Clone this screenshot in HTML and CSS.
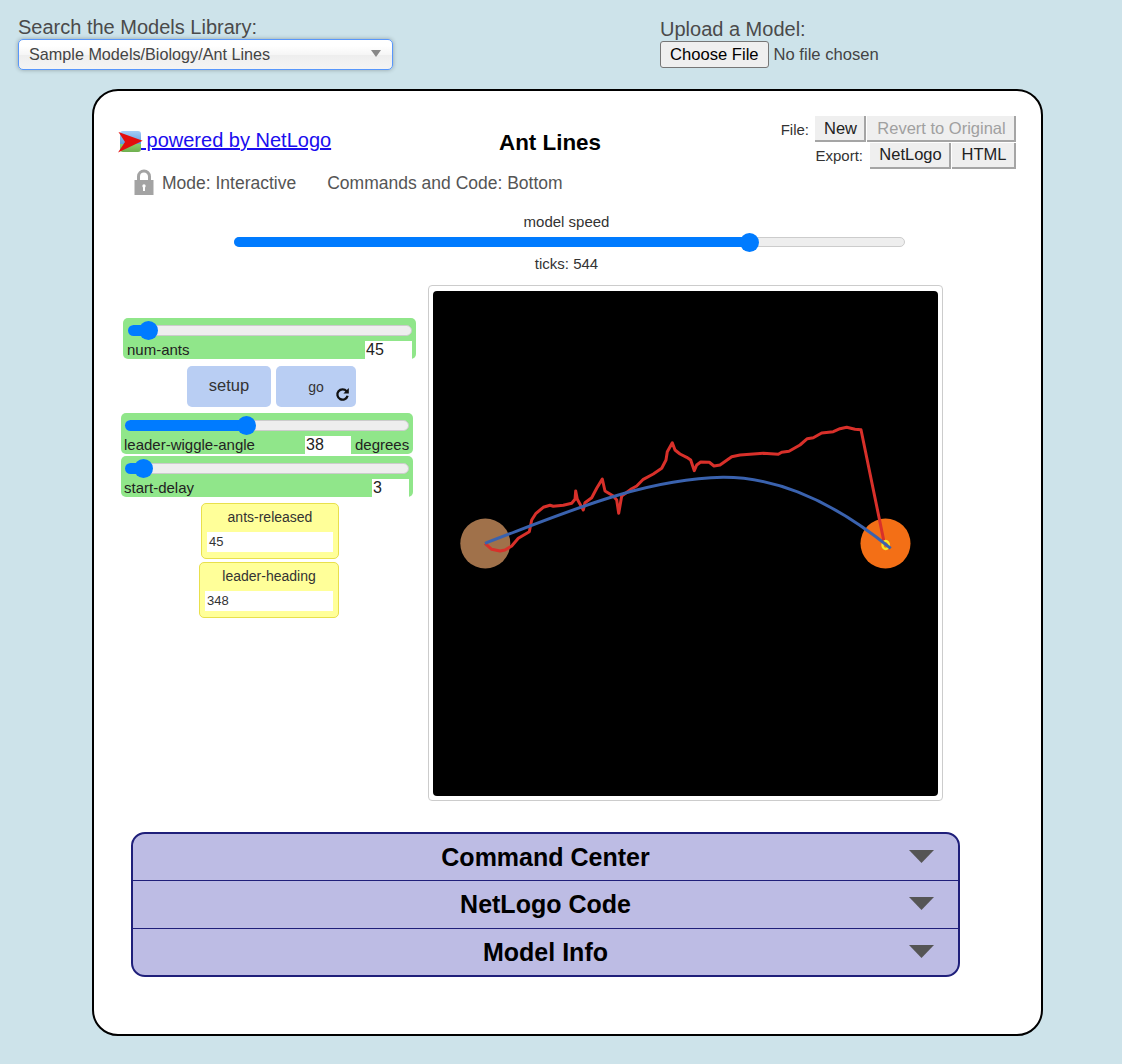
FILE: index.html
```html
<!DOCTYPE html>
<html lang="en">
<head>
    <meta charset="UTF-8">
    <meta name="viewport" content="width=device-width, initial-scale=1.0">
    <title>NetLogo Web</title>
    <link rel="stylesheet" href="styles.css">
</head>
<body>
    <div class="topbar">
        <div class="library">
            <div class="top-label">Search the Models Library:</div>
            <div class="model-select">
                <span>Sample Models/Biology/Ant Lines</span>
                <i class="select-arrow"></i>
            </div>
        </div>
        <div class="upload">
            <div class="top-label">Upload a Model:</div>
            <input type="file" class="file-input">
        </div>
    </div>

    <div class="card">
        <div class="header">
            <a class="powered" href="#"><svg class="logo" width="26" height="22" viewBox="0 0 26 22">
                    <defs>
                        <linearGradient id="sky" x1="0" y1="0" x2="0" y2="1">
                            <stop offset="0" stop-color="#a5cdf7"/>
                            <stop offset="0.6" stop-color="#5f9fe0"/>
                            <stop offset="0.61" stop-color="#8ccb6a"/>
                            <stop offset="1" stop-color="#6fb04f"/>
                        </linearGradient>
                    </defs>
                    <rect x="3" y="0" width="21" height="21" rx="3" fill="url(#sky)"/>
                    <polygon points="1.5,1 25.7,9.7 1,21.5 8,11" fill="#e30d0d"/>
                </svg> powered by NetLogo</a>
            <h1 class="title">Ant Lines</h1>
            <div class="file-tools">
                <div class="tool-row">
                    <span class="tool-label file-label">File:</span>
                    <button class="tool-btn btn-new">New</button>
                    <button class="tool-btn btn-revert">Revert to Original</button>
                </div>
                <div class="tool-row">
                    <span class="tool-label">Export:</span>
                    <button class="tool-btn btn-netlogo">NetLogo</button>
                    <button class="tool-btn btn-html">HTML</button>
                </div>
            </div>
        </div>

        <div class="mode-row">
            <svg class="lock" width="20" height="26" viewBox="0 0 20 26">
                <path d="M4.5 12V7.5a5.5 5.5 0 0 1 11 0V12" fill="none" stroke="#a3a3a3" stroke-width="3"/>
                <rect x="0.5" y="11" width="19" height="15" fill="#a3a3a3"/>
                <rect x="9" y="17" width="2" height="5" fill="#fff"/>
                <circle cx="10" cy="17" r="1.7" fill="#fff"/>
            </svg>
            <span class="mode-text">Mode: Interactive</span>
            <span class="mode-text code-pos">Commands and Code: Bottom</span>
        </div>

        <div class="speed">
            <div class="speed-label">model speed</div>
            <div class="track speed-track"><div class="fill" style="width: 516px"></div></div>
            <div class="speed-label ticks">ticks: 544</div>
        </div>

        <div class="main">
            <div class="widgets">
                <div class="slider slider-ants">
                    <div class="track"><div class="fill" style="width: 21px"></div></div>
                    <div class="slider-info">
                        <span class="slider-name">num-ants</span>
                        <span class="slider-value value-ants">45</span>
                    </div>
                </div>
                <div class="buttons">
                    <button class="run-btn btn-setup">setup</button>
                    <button class="run-btn btn-go">
                        <span>go</span>
                        <svg class="forever" width="15" height="15" viewBox="0 0 15 15">
                            <path d="M11.6 4.2A5.2 5.2 0 1 0 12.6 8.8" fill="none" stroke="#111" stroke-width="2.3"/>
                            <polygon points="13.8,1 13.8,6.6 8.4,6.6" fill="#111"/>
                        </svg>
                    </button>
                </div>
                <div class="slider slider-angle">
                    <div class="track"><div class="fill" style="width: 122px"></div></div>
                    <div class="slider-info">
                        <span class="slider-name">leader-wiggle-angle</span>
                        <span class="slider-value value-angle">38</span>
                        <span class="slider-units">degrees</span>
                    </div>
                </div>
                <div class="slider slider-delay">
                    <div class="track"><div class="fill" style="width: 19px"></div></div>
                    <div class="slider-info">
                        <span class="slider-name">start-delay</span>
                        <span class="slider-value value-delay">3</span>
                    </div>
                </div>
                <div class="monitor monitor-ants">
                    <div class="monitor-name">ants-released</div>
                    <div class="monitor-value">45</div>
                </div>
                <div class="monitor monitor-heading">
                    <div class="monitor-name">leader-heading</div>
                    <div class="monitor-value">348</div>
                </div>
            </div>

            <div class="view">
                <svg class="world" width="505" height="505" viewBox="433 291 505 505">
                    <circle cx="485.3" cy="543.5" r="25" fill="#a0714a"/>
                    <circle cx="885.5" cy="543.5" r="25" fill="#f36f16"/>
                    <polyline class="trail red" points="485,543.3 491.7,549.3 500,551 505,550 511.7,546 518.3,538.3 529.3,531.7 531.7,520 536,513.3 543.3,507.3 550,505.3 553.3,506.3 563.3,505.3 571.7,503.3 575,499.3 575.7,491 577.3,499.3 583.3,510 585,502.7 591.7,497.7 596.7,488.3 602.3,479 605,491 613.3,496 616.7,500 618.7,513.3 621.7,496 631.7,488.7 636.7,486 643.3,479.3 653.3,474 661.7,468.3 666,460 667.3,451.7 672.3,442.7 675,450 680,454 686.7,457.3 690.7,460 694.3,470.7 696.7,465 700.7,462 709.3,462.3 714,466 720,465 731.7,456.7 740,455 763.3,453.3 778.3,454.3 781.7,452.3 789,451.3 800,445 807.3,438.7 813.3,437.7 821.7,433 833.3,431.7 840,428.7 846.7,427.3 855,429.3 861,429.7 884,541.7"/>
                    <ellipse cx="885.7" cy="545" rx="3.2" ry="4" fill="none" stroke="#f5e626" stroke-width="2.4"/>
                    <path class="trail blue" d="M485 543.3C560 515 640 479 723 477.3C780 477 835 503 890.7 548.3"/>
                </svg>
            </div>
        </div>

        <div class="accordion">
            <div class="acc-row"><span class="acc-title">Command Center</span><i class="acc-arrow"></i></div>
            <div class="acc-row"><span class="acc-title">NetLogo Code</span><i class="acc-arrow"></i></div>
            <div class="acc-row"><span class="acc-title">Model Info</span><i class="acc-arrow"></i></div>
        </div>
    </div>
</body>
</html>
```

FILE: styles.css
```css
body {
    margin: 0;
    height: 1064px;
    overflow: hidden;
    background-color: #cde3ea;
    font-family: 'Liberation Sans', Arial, sans-serif;
    color: #444;
}

.topbar {
    display: flex;
    height: 89px;
    padding-left: 18px;
    box-sizing: border-box;
}

.library {
    width: 642px;
    padding-top: 16px;
}

.upload {
    padding-top: 18px;
}

.top-label {
    font-size: 20px;
    line-height: 23px;
    color: #4a4a4a;
}

.model-select {
    display: flex;
    align-items: center;
    justify-content: space-between;
    box-sizing: border-box;
    width: 375px;
    height: 31px;
    padding: 0 11px 0 10px;
    border: 1px solid #5897fb;
    border-radius: 5px;
    background: linear-gradient(#fff 20%, #f6f6f6 50%, #eee 52%, #f4f4f4);
    box-shadow: 0 0 4px rgba(0, 0, 0, 0.3);
    font-size: 16.2px;
    color: #444;
}

.select-arrow {
    width: 0;
    height: 0;
    margin-top: -3px;
    border-left: 5px solid transparent;
    border-right: 5px solid transparent;
    border-top: 7px solid #888;
}

.file-input {
    display: block;
    font-family: 'Liberation Sans', Arial, sans-serif;
    font-size: 16.6px;
    color: #444;
}

.file-input::file-selector-button {
    height: 27px;
    margin-right: 5px;
    padding: 0 9px;
    border: 1px solid #767676;
    border-radius: 3px;
    background-color: #efefef;
    font-family: inherit;
    font-size: 16.6px;
    color: #000;
}

.card {
    box-sizing: border-box;
    width: 951px;
    height: 947px;
    margin-left: 92px;
    padding: 24px 0 0 26px;
    border: 2px solid #000;
    border-radius: 26px;
    background-color: #fff;
}

.header {
    display: flex;
    height: 53px;
}

.powered {
    width: 340px;
    margin-top: 14px;
    font-size: 20px;
    color: #1a0dee;
}

.logo {
    margin: 0 -2px 0 -3px;
    vertical-align: -6px;
}

.title {
    width: 180px;
    margin: 15px 0 0;
    font-size: 22.4px;
    line-height: 26px;
    text-align: center;
    color: #000;
}

.file-tools {
    width: 376px;
}

.tool-row {
    display: flex;
    justify-content: flex-end;
    align-items: center;
    height: 27px;
}

.tool-label {
    margin-right: 6px;
    font-size: 15px;
    color: #333;
}

.file-label {
    margin-right: 5px;
    margin-top: 1px;
}

.tool-btn {
    box-sizing: border-box;
    height: 26px;
    margin-left: 1px;
    padding: 0 0 0 2px;
    border: none;
    border-right: 2px solid #a5a5a5;
    border-bottom: 2px solid #a5a5a5;
    background-color: #efefef;
    font-family: inherit;
    font-size: 16.5px;
    color: #222;
}

.btn-new { width: 51px; padding-top: 2px; }
.btn-revert { width: 149px; padding-top: 2px; color: #a0a0a0; }
.btn-netlogo { width: 81px; }
.btn-html { width: 64px; }

.mode-row {
    display: flex;
    align-items: center;
    height: 27px;
    margin-left: 14px;
}

.lock {
    margin-right: 8px;
}

.mode-text {
    margin-top: 4px;
    font-size: 17.5px;
    color: #555;
}

.code-pos {
    margin-left: 31px;
}

.speed {
    width: 671px;
    height: 90px;
    margin-left: 114px;
    padding-top: 18px;
    box-sizing: border-box;
}

.speed-label {
    padding-right: 6px;
    font-size: 15px;
    line-height: 18px;
    text-align: center;
    color: #333;
}

.ticks {
    margin-top: 8px;
}

.track {
    position: relative;
    box-sizing: border-box;
    height: 11px;
    border: 1px solid #ccc;
    border-radius: 6px;
    background-color: #eee;
}

.speed-track {
    height: 10px;
    margin-top: 6px;
}

.fill {
    position: absolute;
    left: -1px;
    top: -1px;
    height: 11px;
    border-radius: 6px 0 0 6px;
    background-color: #007bff;
}

.speed-track .fill {
    height: 10px;
}

.fill::after {
    content: "";
    position: absolute;
    right: -9px;
    top: -4px;
    width: 19px;
    height: 19px;
    border-radius: 50%;
    background-color: #007bff;
}

.main {
    display: flex;
    height: 516px;
}

.widgets {
    width: 309px;
    flex-shrink: 0;
    padding-top: 33px;
    box-sizing: border-box;
}

.slider {
    box-sizing: border-box;
    height: 41px;
    padding: 7px 4px 0 5px;
    border-radius: 5px;
    background-color: #90e68a;
}

.slider-ants {
    width: 293px;
    margin-left: 3px;
}

.slider-angle {
    width: 292px;
    margin: 6px 0 0 1px;
    padding-left: 4px;
}

.slider-delay {
    width: 292px;
    margin: 2px 0 0 1px;
    padding-left: 4px;
}

.slider-info {
    display: flex;
    align-items: flex-end;
    height: 18px;
    margin-top: 5px;
    font-size: 15px;
    line-height: 18px;
    color: #222;
}

.slider-name {
    flex: 1;
    margin-left: -1px;
}

.slider-value {
    box-sizing: border-box;
    height: 18px;
    padding-left: 1px;
    background-color: #fff;
    font-size: 16px;
    color: #222;
}

.value-ants { width: 47px; }
.value-angle { width: 46px; }
.value-delay { width: 37px; }

.slider-units {
    margin-left: 4px;
    width: 54px;
    text-align: right;
}

.buttons {
    display: flex;
    gap: 5px;
    margin: 7px 0 0 67px;
}

.run-btn {
    height: 41px;
    padding: 0;
    border: none;
    border-radius: 5px;
    background-color: #b9cef3;
    font-family: inherit;
    color: #333;
}

.btn-setup {
    width: 84px;
    font-size: 16.5px;
    padding-bottom: 2px;
}

.btn-go {
    position: relative;
    width: 80px;
    font-size: 14px;
}

.forever {
    position: absolute;
    left: 59px;
    top: 21px;
}

.monitor {
    box-sizing: border-box;
    height: 56px;
    border: 1px solid #e8e04c;
    border-radius: 5px;
    background-color: #ffff99;
    font-size: 14px;
    color: #333;
}

.monitor-ants {
    width: 138px;
    margin: 6px 0 0 81px;
    padding: 0 5px;
}

.monitor-heading {
    width: 140px;
    margin: 3px 0 0 79px;
    padding: 0 5px;
}

.monitor-name {
    height: 28px;
    line-height: 26px;
    text-align: center;
}

.monitor-value {
    height: 20px;
    padding-left: 2px;
    background-color: #fff;
    font-size: 13px;
    line-height: 20px;
}

.view {
    box-sizing: border-box;
    width: 515px;
    height: 516px;
    margin-left: -1px;
    padding: 5px 4px;
    border: 1px solid #ccc;
    border-radius: 4px;
}

.world {
    display: block;
    border-radius: 4px;
    background-color: #000;
}

.trail {
    fill: none;
    stroke-width: 3;
    stroke-linejoin: round;
}

.red { stroke: #d8302a; }
.blue { stroke: #3a62ae; }

.accordion {
    box-sizing: border-box;
    width: 829px;
    height: 145px;
    margin: 31px 0 0 11px;
    border: 2px solid #1f1f7a;
    border-radius: 14px;
    background-color: #bdbce4;
}

.acc-row {
    position: relative;
    height: 48px;
    border-bottom: 1px solid #1f1f7a;
    box-sizing: border-box;
    text-align: center;
}

.acc-row:first-child {
    height: 47px;
}

.acc-row:last-child {
    height: 46px;
    border-bottom: none;
}

.acc-title {
    font-size: 25px;
    font-weight: bold;
    line-height: 46px;
    color: #000;
}

.acc-arrow {
    position: absolute;
    right: 24px;
    top: 16px;
    width: 25px;
    height: 13px;
    background-color: #555;
    clip-path: polygon(0 0, 100% 0, 50% 100%);
}
```
